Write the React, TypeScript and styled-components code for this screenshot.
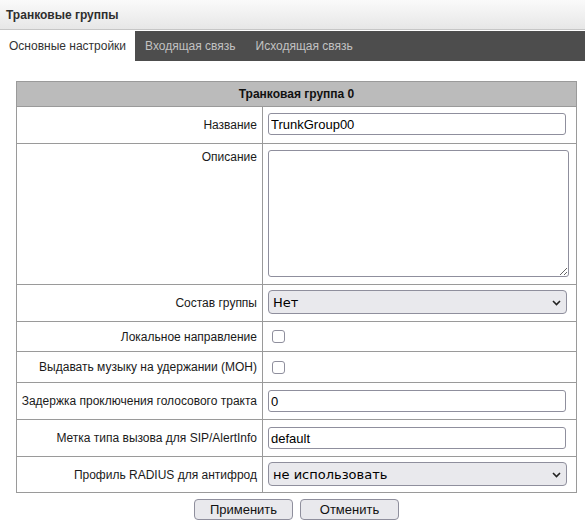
import React from "react";
import styled, { createGlobalStyle } from "styled-components";

const Global = createGlobalStyle`
  html, body { margin: 0; padding: 0; background: #fff; }
  body { font-family: "Liberation Sans", Arial, sans-serif; font-size: 12px; color: #1a1a1a; }
`;

const Page = styled.div`
  width: 585px;
`;

const TitleBar = styled.div`
  height: 29px;
  display: flex;
  align-items: center;
  padding-left: 6px;
  background: linear-gradient(#fafafa, #e7e7e7);
  border-bottom: 1px solid #c6c6c6;
  margin-bottom: 1px;
  font-weight: bold;
  font-size: 12px;
  color: #2e2e2e;
`;

const TabBar = styled.div`
  height: 30px;
  display: flex;
  background: #4d4d4d;
`;

const Tab = styled.div<{ $active?: boolean }>`
  display: flex;
  align-items: center;
  padding: 0 ${(p) => (p.$active ? "9px" : "10px")};
  background: ${(p) => (p.$active ? "#fff" : "transparent")};
  color: ${(p) => (p.$active ? "#333" : "#c2c2c2")};
  font-size: 12px;
`;

const Content = styled.div`
  padding: 20px 0 0 16px;
`;

const Grid = styled.div`
  width: 559px;
  border: 1px solid #9a9a9a;
  display: grid;
  grid-template-columns: 246px 1fr;
`;

const HeaderCell = styled.div`
  grid-column: 1 / span 2;
  height: 24px;
  background: #bbbbbb;
  border-bottom: 1px solid #9a9a9a;
  display: flex;
  align-items: center;
  justify-content: center;
  font-weight: bold;
  font-size: 12px;
  color: #111;
`;

const LabelCell = styled.div<{ $h: number; $top?: boolean; $last?: boolean }>`
  box-sizing: border-box;
  height: ${(p) => p.$h + (p.$last ? 0 : 1)}px;
  border-right: 1px solid #9a9a9a;
  border-bottom: ${(p) => (p.$last ? "none" : "1px solid #9a9a9a")};
  display: flex;
  justify-content: flex-end;
  align-items: ${(p) => (p.$top ? "flex-start" : "center")};
  padding: ${(p) => (p.$top ? "6px" : "0")} 5px 0 0;
  font-size: 12px;
  color: #1a1a1a;
  white-space: nowrap;
`;

const ValueCell = styled.div<{ $h: number; $pt?: number; $center?: boolean; $last?: boolean }>`
  box-sizing: border-box;
  height: ${(p) => p.$h + (p.$last ? 0 : 1)}px;
  border-bottom: ${(p) => (p.$last ? "none" : "1px solid #9a9a9a")};
  padding: ${(p) => p.$pt ?? 0}px 0 0 5px;
  display: flex;
  align-items: ${(p) => (p.$center ? "center" : "flex-start")};
`;

const TextInput = styled.input`
  box-sizing: border-box;
  width: 298px;
  height: 22px;
  margin: 0;
  padding: 0 2px;
  border: 1px solid #8f8f9d;
  border-radius: 3px;
  background: #fff;
  font-family: "Liberation Sans", Arial, sans-serif;
  font-size: 13px;
  color: #000;
  outline: none;
`;

const TextArea = styled.textarea`
  box-sizing: border-box;
  width: 301px;
  height: 127px;
  margin: 0;
  padding: 2px;
  border: 1px solid #8f8f9d;
  border-radius: 3px;
  background: #fff;
  font-family: "Liberation Sans", Arial, sans-serif;
  font-size: 13px;
  outline: none;
`;

const SelectWrap = styled.div`
  position: relative;
  width: 299px;
  height: 24px;
`;

const Select = styled.select`
  box-sizing: border-box;
  appearance: none;
  -webkit-appearance: none;
  width: 100%;
  height: 24px;
  margin: 0;
  padding: 0 20px 0 4px;
  border: 1px solid #8f8f9d;
  border-radius: 4px;
  background: #e9e9ed;
  font-family: "DejaVu Sans", sans-serif;
  font-size: 13px;
  color: #000;
  outline: none;
`;

const Chevron = styled.svg`
  position: absolute;
  right: 6px;
  top: 10px;
  pointer-events: none;
`;

const Check = styled.input`
  appearance: none;
  -webkit-appearance: none;
  box-sizing: border-box;
  width: 13px;
  height: 13px;
  margin: 0 0 0 4px;
  border: 1px solid #8f8f9d;
  border-radius: 3px;
  background: #fff;
`;

const Buttons = styled.div`
  width: 561px;
  display: flex;
  justify-content: center;
  gap: 7px;
  margin-top: 6px;
`;

const Button = styled.button`
  box-sizing: border-box;
  width: 99px;
  height: 21px;
  padding: 0;
  border: 1px solid #8f8f9d;
  border-radius: 4px;
  background: #e9e9ed;
  font-family: "Liberation Sans", Arial, sans-serif;
  font-size: 13px;
  color: #111;
`;

const SelectBox: React.FC<{ options: string[] }> = ({ options }) => (
  <SelectWrap>
    <Select defaultValue={options[0]}>
      {options.map((o) => (
        <option key={o}>{o}</option>
      ))}
    </Select>
    <Chevron width="9" height="6" viewBox="0 0 9 6">
      <path d="M1 1 L4.5 4.5 L8 1" fill="none" stroke="#222" strokeWidth="1.6" />
    </Chevron>
  </SelectWrap>
);

export default function App() {
  return (
    <Page>
      <Global />
      <TitleBar>Транковые группы</TitleBar>
      <TabBar>
        <Tab $active>Основные настройки</Tab>
        <Tab>Входящая связь</Tab>
        <Tab>Исходящая связь</Tab>
      </TabBar>
      <Content>
        <Grid>
          <HeaderCell>Транковая группа 0</HeaderCell>

          <LabelCell $h={36}>Название</LabelCell>
          <ValueCell $h={36} $pt={6}>
            <TextInput defaultValue="TrunkGroup00" />
          </ValueCell>

          <LabelCell $h={140} $top>Описание</LabelCell>
          <ValueCell $h={140} $pt={6}>
            <TextArea />
          </ValueCell>

          <LabelCell $h={36}>Состав группы</LabelCell>
          <ValueCell $h={36} $pt={5}>
            <SelectBox options={["Нет"]} />
          </ValueCell>

          <LabelCell $h={29}>Локальное направление</LabelCell>
          <ValueCell $h={29} $center>
            <Check type="checkbox" />
          </ValueCell>

          <LabelCell $h={30}>Выдавать музыку на удержании (МОН)</LabelCell>
          <ValueCell $h={30} $center>
            <Check type="checkbox" />
          </ValueCell>

          <LabelCell $h={36}>Задержка проключения голосового тракта</LabelCell>
          <ValueCell $h={36} $pt={7}>
            <TextInput defaultValue="0" />
          </ValueCell>

          <LabelCell $h={36}>Метка типа вызова для SIP/AlertInfo</LabelCell>
          <ValueCell $h={36} $pt={7}>
            <TextInput defaultValue="default" />
          </ValueCell>

          <LabelCell $h={35} $last>Профиль RADIUS для антифрод</LabelCell>
          <ValueCell $h={35} $pt={5} $last>
            <SelectBox options={["не использовать"]} />
          </ValueCell>
        </Grid>
        <Buttons>
          <Button>Применить</Button>
          <Button>Отменить</Button>
        </Buttons>
      </Content>
    </Page>
  );
}
